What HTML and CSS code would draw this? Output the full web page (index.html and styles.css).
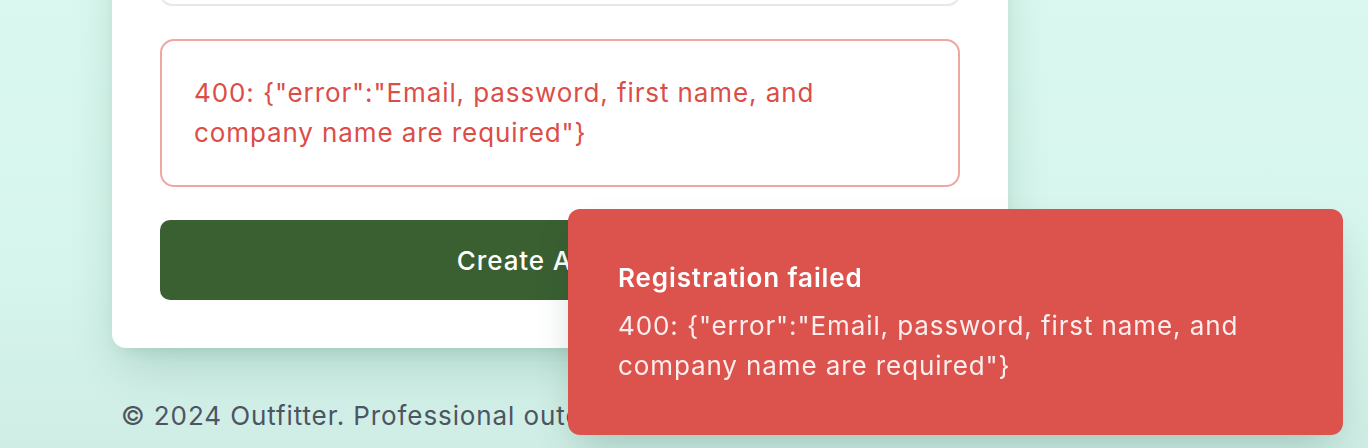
FILE: index.html
```html
<!DOCTYPE html>
<html lang="en">
<head>
<meta charset="utf-8">
<title>Outfitter – Create Account</title>
<link rel="stylesheet" href="styles.css">
</head>
<body>
<div class="page">
  <main class="column">
    <section class="card">
      <form class="form">
        <input class="input" type="text" aria-label="Company name">
        <div class="error-box">400: {"error":"Email, password, first name, and company name are required"}</div>
        <button class="submit" type="button">Create Account</button>
      </form>
    </section>
    <footer class="footer">© 2024 Outfitter. Professional outdoor gear for every mountaineer.</footer>
  </main>
</div>
<div class="toast" role="alert">
  <div class="toast-title">Registration failed</div>
  <div class="toast-desc">400: {"error":"Email, password, first name, and company name are required"}</div>
</div>
</body>
</html>
```

FILE: styles.css
```css
html, body {
  margin: 0;
  height: 100%;
  overflow: hidden;
}
body {
  font-family: Inter, "Noto Sans", sans-serif;
  font-size: 26px;
  letter-spacing: 0.9px;
  background: linear-gradient(180deg, #daf8ef 0%, #d6f5ec 60%, #cfede5 100%);
  color: #111827;
}
.page {
  display: flex;
  padding-left: 112px;
}
.column {
  width: 896px;
  display: flex;
  flex-direction: column;
}
.card {
  margin-top: -122px;
  background: #fff;
  border-radius: 14px;
  padding: 48px;
  box-shadow: 0 22px 50px -10px rgba(20, 80, 60, 0.22), 0 8px 16px -8px rgba(20, 80, 60, 0.12);
}
.form {
  display: flex;
  flex-direction: column;
  gap: 33px;
}
.input {
  height: 80px;
  box-sizing: border-box;
  border: 2px solid #e5e7eb;
  border-radius: 12px;
  background: #fff;
  font: inherit;
}
.error-box {
  border: 2px solid #f0a6a1;
  border-radius: 14px;
  padding: 32px 32px;
  color: #dc4d47;
  line-height: 40px;
}
.submit {
  height: 80px;
  border: 0;
  border-radius: 10px;
  background: #3a5f31;
  color: #fff;
  font-family: inherit;
  font-size: 26px;
  letter-spacing: 0.9px;
  font-weight: 500;
}
.footer {
  margin-top: 52px;
  text-align: center;
  color: #4b5563;
  line-height: 32px;
  white-space: nowrap;
}
.toast {
  position: fixed;
  right: 25px;
  bottom: 13px;
  width: 775px;
  box-sizing: border-box;
  padding: 49px 50px;
  background: #dc524d;
  border-radius: 12px;
  color: #fff;
  box-shadow: 0 20px 40px -10px rgba(20, 80, 60, 0.25);
  display: flex;
  flex-direction: column;
  gap: 8px;
}
.toast-title {
  font-weight: 600;
  line-height: 40px;
}
.toast-desc {
  line-height: 40px;
  opacity: 0.9;
}
```
